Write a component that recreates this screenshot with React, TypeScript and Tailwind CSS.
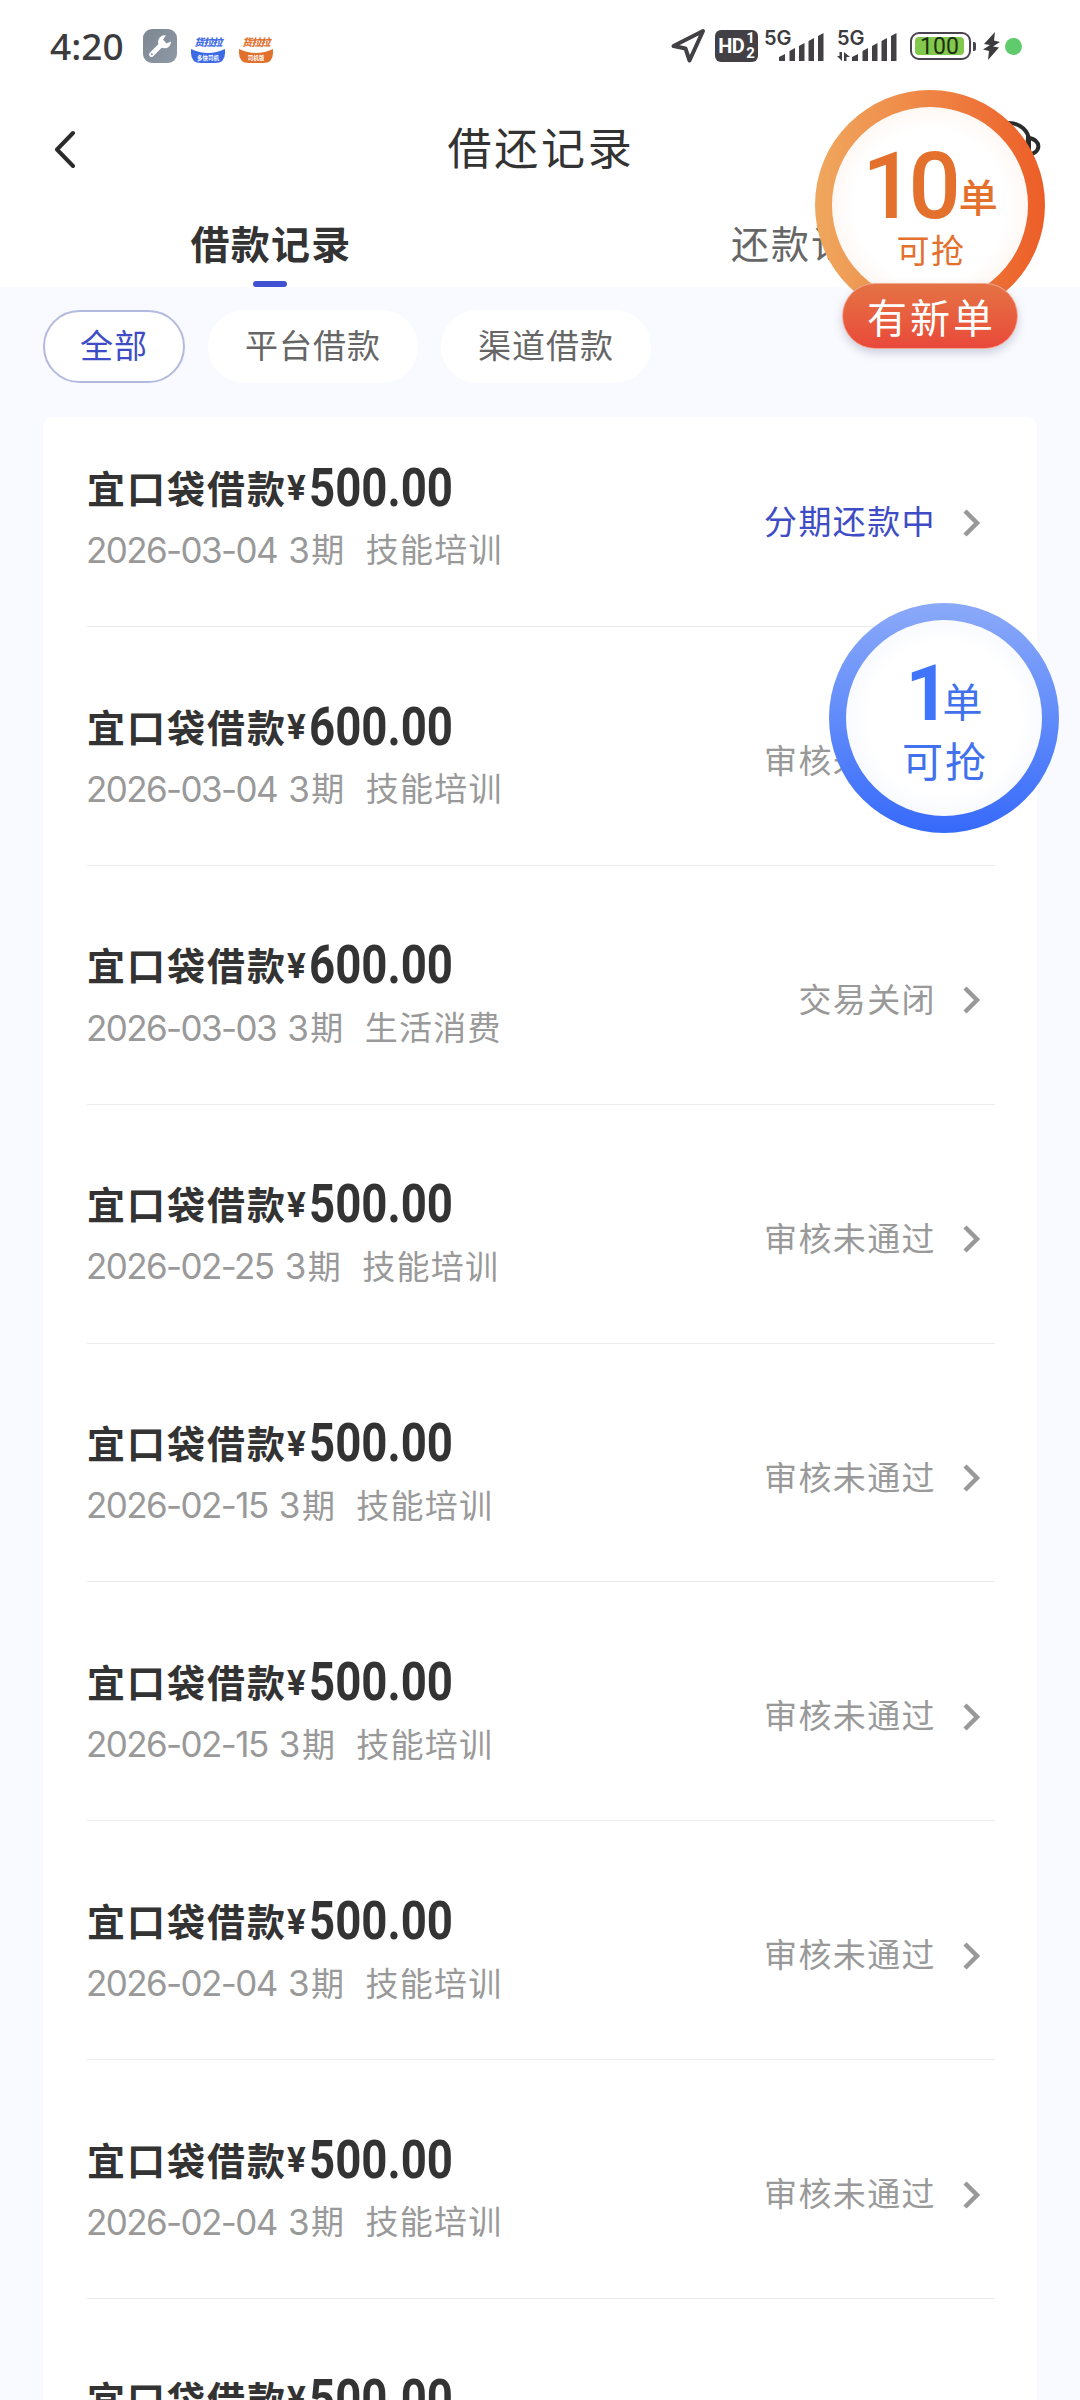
const records = [
  { amount: "500.00", date: "2026-03-04", purpose: "技能培训", status: "分期还款中", active: true },
  { amount: "600.00", date: "2026-03-04", purpose: "技能培训", status: "审核未通过" },
  { amount: "600.00", date: "2026-03-03", purpose: "生活消费", status: "交易关闭" },
  { amount: "500.00", date: "2026-02-25", purpose: "技能培训", status: "审核未通过" },
  { amount: "500.00", date: "2026-02-15", purpose: "技能培训", status: "审核未通过" },
  { amount: "500.00", date: "2026-02-15", purpose: "技能培训", status: "审核未通过" },
  { amount: "500.00", date: "2026-02-04", purpose: "技能培训", status: "审核未通过" },
  { amount: "500.00", date: "2026-02-04", purpose: "技能培训", status: "审核未通过" },
  { amount: "500.00", date: "", purpose: "", status: "" },
]

const filters = ["全部", "平台借款", "渠道借款"]

function AppBadge({ label, className }: { label: string; className: string }) {
  return (
    <div className={`relative h-[34px] w-[34px] rounded-b-[9px] bg-white ${className}`}>
      <div className="mt-[7px] text-center text-[10px] leading-[12px] font-black tracking-[-0.800px] whitespace-nowrap italic">货拉拉</div>
      <svg className="absolute bottom-0 left-0" width="34" height="14" viewBox="0 0 34 14">
        <path d="M0 0 Q17 8 34 0 V4 Q34 14 24 14 H10 Q0 14 0 4 Z" fill="currentColor" />
      </svg>
      <div className="absolute bottom-[1px] w-full text-center text-[5.500px] leading-[7px] font-bold whitespace-nowrap text-white">{label}</div>
    </div>
  )
}

function Signal({ data }: { data?: boolean }) {
  return (
    <div className="relative h-[34px] w-[60px]">
      <span className="absolute top-0 left-0 font-[Inter] text-[20px] leading-[18px] font-semibold">5G</span>
      <svg className="absolute right-0 bottom-[1px]" width="60" height="32" viewBox="0 0 60 32" fill="#424044">
        <path d="M15 31 V27 L21 24 V31 Z M25.500 31 V21 L31 18 V31 Z M35 31 V16 L40.500 13 V31 Z M44.500 31 V11 L50 8 V31 Z M54 31 V6 L59.500 3 V31 Z" />
        {data && <path d="M0 26 H2.500 V22 H5 V31 Z M7 22 L13 27 H9.500 V31 H7 Z" />}
      </svg>
    </div>
  )
}

function StatusBar() {
  return (
    <div className="flex h-[92px] items-center justify-between pr-[58px] pl-[50px] text-[#3c3b3e]">
      <div className="flex items-center">
        <span className="mb-[2px] w-[93px] font-['Noto_Sans'] text-[37px] leading-none font-medium">4:20</span>
        <div className="flex gap-[14px]">
          <div className="flex h-[34px] w-[34px] items-center justify-center rounded-[9px] bg-linear-to-br from-[#7d8792] to-[#8e99a6]">
            <svg width="24" height="24" viewBox="0 0 24 24">
              <path d="M3.500 20.500 L13 11" stroke="#fff" strokeWidth="4.800" strokeLinecap="round" />
              <path d="M18 1.500 A6.500 6.500 0 1 0 23 7.500 L18.500 9.500 L15 5.500 Z" fill="#fff" />
              <circle cx="3.800" cy="20.200" r="1" fill="#84909c" />
            </svg>
          </div>
          <AppBadge label="多快司机" className="text-[#3d6ae6]" />
          <AppBadge label="司机版" className="text-[#e0702c]" />
        </div>
      </div>
      <div className="flex items-center">
        <svg width="36" height="36" viewBox="0 0 36 36" fill="none" stroke="#424044" strokeWidth="4" strokeLinejoin="round">
          <path d="M33 3 L3.500 18 L15.500 20.500 L19.500 32.500 Z" />
        </svg>
        <div className="ml-[9px] flex h-[32px] w-[43px] items-center justify-center rounded-[6px] bg-[#424044] font-[Roboto] font-bold text-white">
          <span className="text-[20px] leading-none tracking-[-0.500px]">HD</span>
          <span className="ml-[2px] flex flex-col text-[15px] leading-[15px]">
            <span>1</span>
            <span>2</span>
          </span>
        </div>
        <div className="ml-[6px] flex gap-[13px]">
          <Signal />
          <Signal data />
        </div>
        <div className="ml-[13px] flex h-[28px] w-[61px] items-center rounded-[9px] border-[2.500px] border-[#4a444e] p-[3px]">
          <div className="flex h-full w-[49px] items-center justify-center rounded-[4px] bg-[#82c84c] font-[Roboto] text-[23px] leading-none text-[#1d3016]">100</div>
        </div>
        <div className="ml-[2px] h-[9px] w-[3px] rounded-r-[2px] bg-[#4a444e]" />
        <svg className="ml-[7px]" width="17" height="28" viewBox="0 0 17 28" fill="#3c3b3e">
          <path d="M12 0 L1 12 L7 13 L0 17.500 L6 19 L5 28 L16 15.500 L10 14.500 L17 10 L11 8.500 Z" />
        </svg>
        <div className="ml-[5px] h-[17px] w-[17px] rounded-full bg-[#60cb6c]" />
      </div>
    </div>
  )
}

function OrangeBubble() {
  return (
    <div className="absolute top-[90px] left-[815px] h-[260px] w-[230px]">
      <div className="h-[230px] w-[230px] rounded-full bg-linear-to-r from-[#efa75e] to-[#ec5d27] p-[17px]">
        <div className="flex h-full flex-col items-center rounded-full bg-radial from-white from-55% to-[#fdebe1] to-100% text-[#e4702d]">
          <div className="mt-[42px] flex h-[76px] items-end">
            <span className="font-[Roboto] text-[92px] leading-[76px] font-medium tracking-[-6px]">10</span>
            <span className="mb-[10px] ml-[4px] text-[39px] leading-[40px] font-medium">单</span>
          </div>
          <span className="ml-[2px] text-[33px] leading-[48px] tracking-[1.500px]">可抢</span>
        </div>
      </div>
      <div className="absolute top-[193px] left-[27px] flex h-[66px] w-[176px] items-center justify-center rounded-full border-[1.500px] border-[#f4a892] bg-linear-to-b from-[#e47244] to-[#e9483a] text-[40px] leading-none tracking-[3px] text-white shadow-[0_4px_8px_rgba(120,130,160,0.350)]">
        <span className="-mr-[3px]">有新单</span>
      </div>
    </div>
  )
}

function BlueBubble() {
  return (
    <div className="absolute top-[603px] left-[829px] h-[230px] w-[230px] rounded-full bg-linear-to-b from-[#8ba9f8] to-[#3769fa] p-[17px]">
      <div className="flex h-full flex-col items-center rounded-full bg-radial from-white from-55% to-[#edf1fe] to-100% text-[#4271ee]">
        <div className="mt-[42px] flex h-[64px] items-end">
          <span className="font-[Roboto] text-[77px] leading-[64px] font-bold tracking-[-7px] text-[#3f74fb]">1</span>
          <span className="mb-[6px] text-[40px] leading-[40px]">单</span>
        </div>
        <span className="ml-[2px] text-[41px] leading-[66px] tracking-[2px]">可抢</span>
      </div>
    </div>
  )
}

export default function App() {
  return (
    <div className="relative h-[2400px] w-[1080px] overflow-hidden bg-[#f9faff] font-['Noto_Sans_CJK_SC',sans-serif]">
      <header className="h-[287px] bg-white">
        <StatusBar />
        <div className="flex h-[112px] items-center justify-between pr-[39px] pl-[54px]">
          <svg className="mt-[1px]" width="22" height="38" viewBox="0 0 22 38" fill="none" stroke="#2b2b2b" strokeWidth="4" strokeLinecap="round" strokeLinejoin="round">
            <path d="M19 3 L3 19.500 L19 36" />
          </svg>
          <h1 className="mb-[5px] ml-[31px] text-[44px] leading-none tracking-[2.700px] text-[#333]">借还记录</h1>
          {/* customer service headset */}
          <svg className="mb-[2px]" width="66" height="52" viewBox="0 0 66 52" fill="none" stroke="#2b2b2b" strokeWidth="4">
            <path d="M14 20 A20 18 0 0 1 54 20 V36 C51 45 42 48 33 48" />
            <path d="M14 17 C0 17 0 34 14 34 Z M53 17 C67 18 67 33 52 34 Z" />
          </svg>
        </div>
        <nav className="grid h-[83px] grid-cols-2 text-center">
          <div className="flex flex-col items-center justify-between pt-[16px]">
            <span className="ml-[2px] text-[39px] leading-[44px] font-bold tracking-[1.200px] text-[#333]">借款记录</span>
            <span className="h-[6px] w-[34px] rounded-[3px] bg-[#4250d2]" />
          </div>
          <div className="ml-[2px] pt-[16px] text-[38px] leading-[44px] tracking-[2px] text-[#666]">还款记录</div>
        </nav>
      </header>
      <div className="flex gap-[23px] px-[43px] pt-[23px]">
        {filters.map((name, index) => (
          <button
            key={name}
            className={`flex h-[73px] items-center rounded-full border-2 bg-white pr-[35px] pb-[3px] pl-[35px] text-[33px] tracking-[1px] ${
              index === 0 ? "border-[#b4badf] text-[#3e4cc6]" : "border-white text-[#666]"
            }`}
          >
            {name}
          </button>
        ))}
      </div>
      <main className="mt-[34px] ml-[43px] w-[994px] rounded-[10px] bg-white pr-[42px] pl-[44px]">
        {records.map((item, index) => (
          <div key={index} className="flex h-[238.860px] items-start justify-between border-b border-[#ebebeb] pt-[69px] first:h-[210px] first:pt-[40px]">
            <div>
              <div className="flex h-[60px] items-center font-bold text-[#333]">
                <span className="mb-[2px] text-[38px] tracking-[2px]">宜口袋借款</span>
                <span className="mt-[5px] w-[22px] font-[Roboto] text-[35px]">¥</span>
                <span className="mt-[2px] origin-left scale-x-[0.860] font-[Roboto] text-[53px] leading-none">{item.amount}</span>
              </div>
              {item.date && (
                <div className="mt-[2px] flex h-[60px] items-center text-[33px] tracking-[1.300px] text-[#999]">
                  <span className="mt-[2px] -ml-[1px] font-[Inter] text-[35px] tracking-[-1.600px] [word-spacing:3px]">{item.date} 3</span>
                  <span className="ml-[3px]">期</span>
                  <span className="ml-[20px]">{item.purpose}</span>
                </div>
              )}
            </div>
            {item.status && (
              <div className="mt-[36px] flex items-center pr-[14px]">
                <span className={`mb-[5px] text-[33px] leading-[54px] tracking-[1.400px] ${item.active ? "text-[#3e4cc6]" : "text-[#999]"}`}>{item.status}</span>
                <svg className="ml-[27px]" width="18" height="30" viewBox="0 0 18 30" fill="none" stroke="#999" strokeWidth="4.500">
                  <path d="M2 3 L14 15 L2 27" />
                </svg>
              </div>
            )}
          </div>
        ))}
      </main>
      <OrangeBubble />
      <BlueBubble />
    </div>
  )
}
